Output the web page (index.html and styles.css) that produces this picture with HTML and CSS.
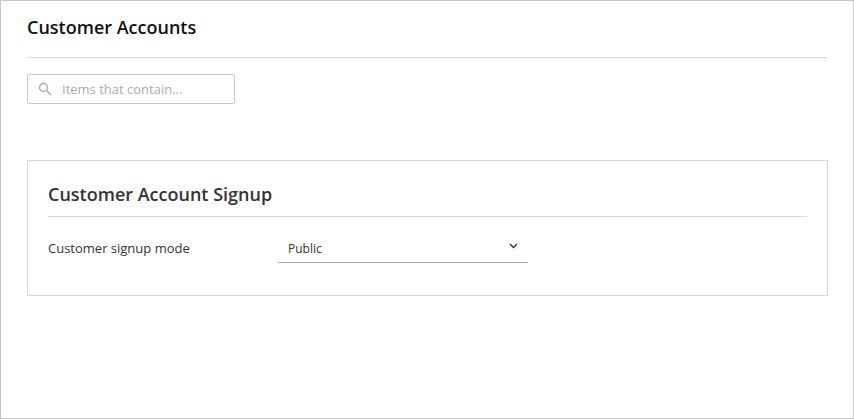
FILE: index.html
```html
<!DOCTYPE html>
<html lang="en">
<head>
    <meta charset="UTF-8">
    <title>Customer Accounts</title>
    <link rel="stylesheet" href="styles.css">
</head>
<body>
    <div class="page">
        <h1 class="page-title">Customer Accounts</h1>

        <div class="search-box">
            <svg class="search-icon" width="14" height="14" viewBox="0 0 14 14">
                <circle cx="5.5" cy="5.5" r="4" fill="none" stroke="#aaa" stroke-width="1.3"/>
                <path d="M8.5 8.5 L13 13" stroke="#aaa" stroke-width="1.6" fill="none"/>
            </svg>
            <span class="search-text">Items that contain...</span>
        </div>

        <div class="panel">
            <h2 class="panel-title">Customer Account Signup</h2>
            <div class="field">
                <span class="field-label">Customer signup mode</span>
                <div class="select-box">
                    <span>Public</span>
                    <svg class="chevron" width="9" height="6" viewBox="0 0 9 6">
                        <path d="M1 1 L4.5 4.5 L8 1" fill="none" stroke="#333" stroke-width="1.4"/>
                    </svg>
                </div>
            </div>
        </div>
    </div>
</body>
</html>
```

FILE: styles.css
```css
* {
    margin: 0;
    padding: 0;
    box-sizing: border-box;
}

html, body {
    height: 100%;
}

body {
    font-family: "Open Sans", sans-serif;
    background-color: #fff;
    overflow: hidden;
}

.page {
    height: 419px;
    padding: 0 25px 0 26px;
    border: 1px solid #c8c8c8;
}

.page-title {
    height: 57px;
    padding-top: 14px;
    font-size: 18px;
    line-height: 25px;
    font-weight: 600;
    color: #111;
    border-bottom: 1px solid #d9d9d9;
}

.search-box {
    display: flex;
    align-items: center;
    width: 208px;
    height: 30px;
    margin-top: 16px;
    padding-left: 10px;
    border: 1px solid #c8c8c8;
    border-radius: 2px;
}

.search-text {
    margin-left: 10px;
    font-size: 13px;
    color: #aaa;
}

.panel {
    height: 136px;
    margin-top: 56px;
    padding: 19px 20px 0;
    border: 1px solid #d9d9d9;
}

.panel-title {
    height: 37px;
    font-size: 18px;
    line-height: 28px;
    font-weight: 600;
    color: #333;
    border-bottom: 1px solid #d9d9d9;
}

.field {
    display: flex;
    align-items: center;
    margin-top: 16px;
    font-size: 13px;
    color: #333;
}

.field-label {
    width: 230px;
}

.select-box {
    display: flex;
    justify-content: space-between;
    width: 250px;
    height: 30px;
    padding: 7px 10px 0 10px;
    border-bottom: 1px solid #aaa;
    font-size: 12px;
}

.chevron {
    margin-top: 3px;
}
```
